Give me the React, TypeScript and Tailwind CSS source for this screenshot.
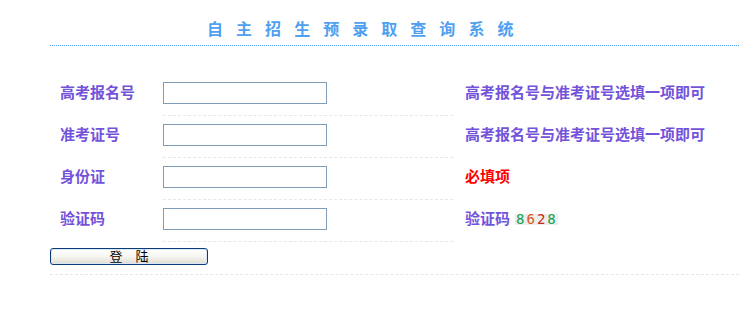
import React from "react"

const labelCls = "w-[113px] pl-[10px] h-[22px] flex items-center text-[15px] font-bold text-[#7353d9] whitespace-nowrap"
const hintCls = "pl-[12px] h-[22px] flex items-center text-[15px] font-bold whitespace-nowrap"

function Linha({ rotulo, dica }: { rotulo: string, dica: React.ReactNode }) {
    return (
        <div className="flex items-start">
            <div className="pt-[8px]">
                <div className={labelCls}>{rotulo}</div>
            </div>
            <div className="w-[290px] h-[42px] pt-[8px] border-b border-dashed border-b-[#e3e8ec]">
                <input type="text" className="block w-[164px] h-[22px] border border-[#7f9db9] bg-white outline-none" />
            </div>
            <div className="pt-[8px]">
                <div className={hintCls}>{dica}</div>
            </div>
        </div>
    )
}

export default function App() {
    return (
        <div className="w-[739px] h-[321px] bg-white overflow-hidden font-['Liberation_Sans','Noto_Sans_CJK_SC',sans-serif]">
            <div className="ml-[50px]">
                <div className="h-[45px] pl-[157px] pt-[18px]">
                    <span className="text-[16px] leading-[18px] font-bold text-[#4fa0f0] tracking-[4.3px] whitespace-nowrap">
                        自 主 招 生 预 录 取 查 询 系 统
                    </span>
                </div>
                {/* linha pontilhada azul */}
                <div className="h-px bg-[repeating-linear-gradient(to_right,#4a9cf2_0_1px,transparent_1px_2px)]"></div>
                <div className="mt-[28px]">
                    <Linha rotulo="高考报名号" dica={<span className="text-[#7353d9]">高考报名号与准考证号选填一项即可</span>} />
                    <Linha rotulo="准考证号" dica={<span className="text-[#7353d9]">高考报名号与准考证号选填一项即可</span>} />
                    <Linha rotulo="身份证" dica={<span className="text-[#ff0000]">必填项</span>} />
                    <Linha
                        rotulo="验证码"
                        dica={
                            <span className="flex items-center text-[#7353d9]">
                                验证码
                                <span className="ml-[5px] inline-flex items-center h-[11px] pl-[1px] bg-[#eeeeee] font-['DejaVu_Sans_Mono',monospace] font-normal text-[14px] leading-[11px] tracking-[2px]">
                                    <span className="text-[#12a04c]">8</span>
                                    <span className="text-[#d8561c]">6</span>
                                    <span className="text-[#c42a14]">2</span>
                                    <span className="text-[#12a04c]">8</span>
                                </span>
                            </span>
                        }
                    />
                    <div className="h-[33px] pt-[6px] border-b border-dashed border-b-[#e3e8ec]">
                        <button className="block w-[158px] h-[17px] border border-[#0a3c78] rounded-[3px] bg-gradient-to-b from-white via-[#f6f6f2] to-[#dedbd0] shadow-[inset_0_0_0_1px_#dbe6f6] text-[13px] leading-none text-black">
                            登　陆
                        </button>
                    </div>
                </div>
            </div>
        </div>
    )
}
